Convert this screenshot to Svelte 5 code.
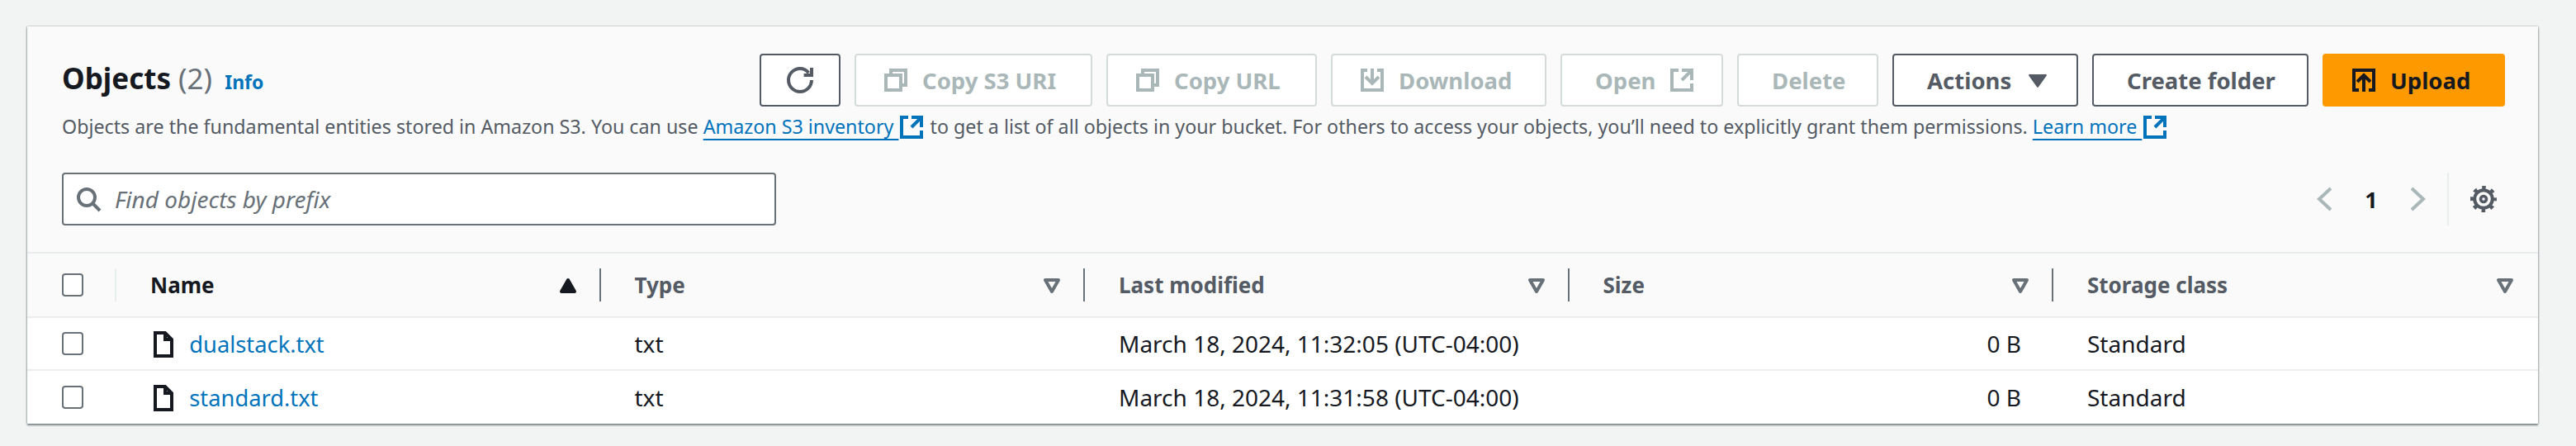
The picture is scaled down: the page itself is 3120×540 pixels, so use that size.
<script lang="ts">
	type Column = { key: string; label: string; sort: 'asc' | 'none' };

	const columns: Column[] = [
		{ key: 'name', label: 'Name', sort: 'asc' },
		{ key: 'type', label: 'Type', sort: 'none' },
		{ key: 'modified', label: 'Last modified', sort: 'none' },
		{ key: 'size', label: 'Size', sort: 'none' },
		{ key: 'storage', label: 'Storage class', sort: 'none' }
	];

	const objects = [
		{ name: 'dualstack.txt', type: 'txt', modified: 'March 18, 2024, 11:32:05 (UTC-04:00)', size: '0 B', storage: 'Standard' },
		{ name: 'standard.txt', type: 'txt', modified: 'March 18, 2024, 11:31:58 (UTC-04:00)', size: '0 B', storage: 'Standard' }
	];
</script>

{#snippet external()}
	<svg class="icon ext" viewBox="0 0 16 16" aria-hidden="true">
		<path d="M14 8.01v-6H8M14.02 2 8 8" />
		<path d="M6 2.01H2v12h12v-3.99" />
	</svg>
{/snippet}

{#snippet copy()}
	<svg class="icon" viewBox="0 0 16 16" aria-hidden="true">
		<path d="M2 5h9v9H2z" />
		<path d="M5 5V2h9v9h-3" />
	</svg>
{/snippet}

<section class="panel">
	<div class="head">
		<div class="top">
			<h2>Objects <span class="count">(2)</span> <a class="info" href="#info">Info</a></h2>
			<div class="actions">
				<button class="btn refresh" type="button" aria-label="Refresh">
					<svg class="icon" viewBox="0 0 16 16" aria-hidden="true">
						<path d="M15 8a7 7 0 1 1-7-7c2.2 0 3.9 1 5.2 2.6" />
						<path d="M15 .5V5h-4.7" />
					</svg>
				</button>
				<button class="btn off lead copy-uri" type="button" disabled>{@render copy()} Copy S3 URI</button>
				<button class="btn off lead copy-url" type="button" disabled>{@render copy()} Copy URL</button>
				<button class="btn off lead download" type="button" disabled>
					<svg class="icon" viewBox="0 0 16 16" aria-hidden="true">
						<path d="M11 2h3v12H2V2h3" />
						<path d="m4 6 4 4 4-4" />
						<path d="M8 1v9" />
					</svg>
					Download
				</button>
				<button class="btn off open" type="button" disabled>Open {@render external()}</button>
				<button class="btn off delete" type="button" disabled>Delete</button>
				<button class="btn more" type="button">
					Actions
					<svg class="caret" viewBox="0 0 16 16" aria-hidden="true"><path d="M3 5h10L8 12z" /></svg>
				</button>
				<button class="btn create" type="button">Create folder</button>
				<button class="btn primary lead upload" type="button">
					<svg class="icon" viewBox="0 0 16 16" aria-hidden="true">
						<path d="M5 14H2V2h12v12h-3" />
						<path d="m4 9 4-4 4 4" />
						<path d="M8 5v10" />
					</svg>
					Upload
				</button>
			</div>
		</div>
		<p class="desc">
			Objects are the fundamental entities stored in Amazon S3. You can use
			<a href="#inventory">Amazon S3 inventory&nbsp;</a>{@render external()} to get a list of all objects in your bucket.
			For others to access your objects, you’ll need to explicitly grant them permissions.
			<a href="#learn">Learn more&nbsp;</a>{@render external()}
		</p>
		<div class="tools">
			<label class="search">
				<svg class="icon" viewBox="0 0 16 16" aria-hidden="true">
					<circle cx="7" cy="7" r="5" />
					<path d="m15 15-4.5-4.5" />
				</svg>
				<input type="text" placeholder="Find objects by prefix" />
			</label>
			<div class="pager">
				<svg class="chev" viewBox="0 0 16 16" aria-hidden="true"><path d="M11.5 1.5 4.5 8l7 6.5" /></svg>
				<span class="page">1</span>
				<svg class="chev" viewBox="0 0 16 16" aria-hidden="true"><path d="m4.5 1.5 7 6.5-7 6.5" /></svg>
			</div>
			<button class="gear" type="button" aria-label="Preferences">
				<svg class="icon" viewBox="0 0 16 16" aria-hidden="true">
					<circle class="hub" cx="8" cy="8" r="1.75" />
					<circle cx="8" cy="8" r="5.4" />
					<circle class="teeth" cx="8" cy="8" r="7" />
				</svg>
			</button>
		</div>
	</div>

	<table>
		<colgroup>
			<col class="c-check" />
			<col class="c-data" />
			<col class="c-data" />
			<col class="c-data" />
			<col class="c-data" />
			<col />
		</colgroup>
		<thead>
			<tr>
				<th><div class="cell check"><span class="box"></span></div></th>
				{#each columns as col}
					<th>
						<div class="cell" class:active={col.sort === 'asc'}>
							<span>{col.label}</span>
							<svg class="sort" viewBox="0 0 16 16" aria-hidden="true">
								{#if col.sort === 'asc'}
									<path class="solid" d="M8 5l4 7H4z" />
								{:else}
									<path d="M4 5h8l-4 7z" />
								{/if}
							</svg>
						</div>
					</th>
				{/each}
			</tr>
		</thead>
		<tbody>
			{#each objects as row}
				<tr>
					<td class="td-check"><span class="box"></span></td>
					<td class="td-name">
						<svg class="icon file" viewBox="0 0 16 16" aria-hidden="true">
							<path d="M9 1H3v14h10V5z" />
							<path d="M9 1v4h4" />
						</svg>
						<a href="#object">{row.name}</a>
					</td>
					<td>{row.type}</td>
					<td>{row.modified}</td>
					<td class="size">{row.size}</td>
					<td>{row.storage}</td>
				</tr>
			{/each}
		</tbody>
	</table>
</section>

<style>
	:global(body) {
		background: #f2f3f3;
		font-family: 'Noto Sans', 'Open Sans', sans-serif;
		color: #16191f;
	}

	.panel {
		margin: 32px 46px 27px 33px;
		background: #fafafa;
		box-shadow:
			0 2px 2px rgba(0, 28, 36, 0.45),
			1px 0 2px rgba(0, 28, 36, 0.2),
			-1px 0 2px rgba(0, 28, 36, 0.2);
	}

	.head {
		box-sizing: border-box;
		height: 273px;
		padding: 33px 40px 0 42px;
	}

	.top {
		display: flex;
		justify-content: space-between;
		align-items: center;
		height: 64px;
	}

	h2 {
		margin: 0;
		font-size: 35px;
		font-weight: 700;
		line-height: 62px;
		white-space: nowrap;
	}

	.count {
		color: #687078;
		font-weight: 400;
	}

	.info {
		margin-left: 6px;
		color: #0073bb;
		font-size: 23px;
		font-weight: 700;
		text-decoration: none;
	}

	.actions {
		display: flex;
		gap: 17px;
	}

	.btn {
		box-sizing: border-box;
		display: flex;
		align-items: center;
		gap: 16px;
		height: 64px;
		padding: 0 0 0 40px;
		border: 2px solid #545b64;
		border-radius: 4px;
		background: #fff;
		color: #545b64;
		font: 700 27.5px 'Noto Sans', sans-serif;
		white-space: nowrap;
	}

	.btn.lead {
		padding-left: 32px;
	}

	.copy-uri { width: 288px; }
	.copy-url { width: 255px; }
	.download { width: 261px; }
	.open { width: 197px; }
	.delete { width: 171px; }
	.more { width: 225px; }
	.create { width: 262px; }
	.upload { width: 221px; }

	.refresh {
		width: 98px;
		justify-content: center;
		padding: 0;
	}

	.off {
		border-color: #d5dbdb;
		color: #aab7b8;
	}

	.primary {
		border-color: #f90;
		background: #f90;
		color: #16191f;
	}

	.icon {
		flex: none;
		width: 32px;
		height: 32px;
		fill: none;
		stroke: currentColor;
		stroke-width: 2;
	}

	.caret {
		flex: none;
		width: 32px;
		height: 32px;
		fill: currentColor;
		stroke: currentColor;
		stroke-width: 1;
		stroke-linejoin: round;
	}

	.desc {
		margin: 4px 0 0;
		color: #545b64;
		font-size: 23.25px;
		line-height: 40px;
		white-space: nowrap;
	}

	.desc a {
		color: #0073bb;
		text-decoration: underline;
		text-decoration-thickness: 2px;
		text-decoration-skip-ink: none;
		text-underline-offset: 6px;
	}

	.desc .ext {
		color: #0073bb;
		vertical-align: -8px;
	}

	.tools {
		display: flex;
		align-items: center;
		margin-top: 36px;
		height: 64px;
	}

	.search {
		box-sizing: border-box;
		display: flex;
		align-items: center;
		gap: 16px;
		width: 865px;
		height: 64px;
		padding: 0 14px;
		border: 2px solid #687078;
		border-radius: 4px;
		background: #fff;
		color: #687078;
	}

	.search input {
		flex: 1;
		min-width: 0;
		border: 0;
		outline: 0;
		padding: 0;
		background: transparent;
		font: italic 400 28px 'Noto Sans', sans-serif;
	}

	.search input::placeholder {
		color: #687078;
		opacity: 1;
	}

	.pager {
		display: flex;
		align-items: center;
		margin-left: auto;
		padding-right: 20px;
		border-right: 2px solid #eaeded;
		height: 64px;
	}

	.chev {
		width: 32px;
		height: 32px;
		fill: none;
		stroke: #aab7b8;
		stroke-width: 2;
	}

	.page {
		width: 80px;
		font-size: 27px;
		font-weight: 700;
		text-align: center;
	}

	.gear {
		display: flex;
		margin: 0 10px 0 26px;
		padding: 0;
		border: 0;
		background: none;
		color: #545b64;
	}

	.hub {
		stroke-width: 1.8;
	}

	.teeth {
		stroke-dasharray: 2.3 3.2;
		stroke-dashoffset: 1.15;
	}

	table {
		width: 100%;
		border-collapse: separate;
		border-spacing: 0;
		table-layout: fixed;
		font-size: 28px;
	}

	.c-check {
		width: 108px;
	}

	.c-data {
		width: 586.5px;
	}

	th {
		height: 76px;
		padding: 0;
		border-top: 2px solid #eaeded;
		border-bottom: 2px solid #eaeded;
		font-size: 26px;
		font-weight: 700;
		text-align: left;
		color: #545b64;
	}

	.cell {
		box-sizing: border-box;
		display: flex;
		justify-content: space-between;
		align-items: center;
		height: 40px;
		padding: 0 22px 0 41px;
		border-right: 2px solid #687078;
	}

	th:last-child .cell {
		border-right: 0;
		padding-right: 24px;
	}

	.cell.check {
		padding: 0 0 0 42px;
		border-right-color: #eaeded;
	}

	.cell.active {
		color: #16191f;
	}

	.sort {
		flex: none;
		width: 32px;
		height: 32px;
		fill: none;
		stroke: #687078;
		stroke-width: 2;
		stroke-linejoin: round;
	}

	.solid {
		fill: #16191f;
		stroke: #16191f;
	}

	.box {
		box-sizing: border-box;
		display: block;
		width: 26px;
		height: 28px;
		border: 2px solid #687078;
		border-radius: 4px;
		background: #fff;
	}

	td {
		height: 62px;
		padding: 0 0 0 41px;
		border-bottom: 2px solid #eaeded;
		background: #fff;
		white-space: nowrap;
	}

	td.td-check {
		padding-left: 42px;
	}

	tbody tr:last-child td {
		border-bottom: 0;
		height: 64px;
	}

	.td-name a {
		color: #0073bb;
		font-size: 27.3px;
		text-decoration: none;
	}

	.file {
		margin-right: 8px;
		vertical-align: -6px;
	}

	td.size {
		padding: 0 39px 0 0;
		text-align: right;
	}
</style>
